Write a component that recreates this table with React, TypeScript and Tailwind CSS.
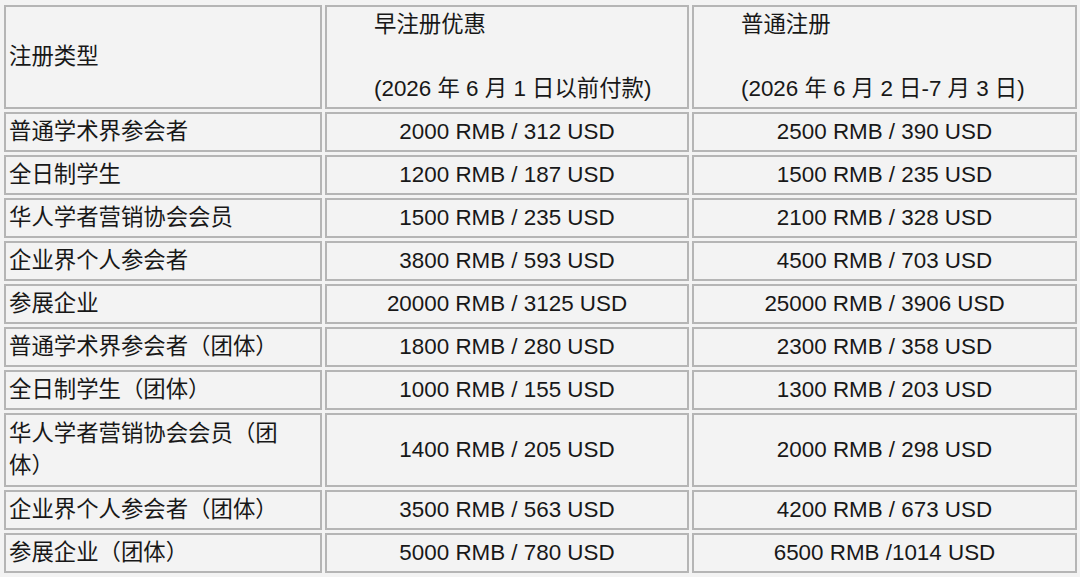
const rows: { name: React.ReactNode; early: string; normal: string; tall?: boolean }[] = [
  { name: "普通学术界参会者", early: "2000 RMB / 312 USD", normal: "2500 RMB / 390 USD" },
  { name: "全日制学生", early: "1200 RMB / 187 USD", normal: "1500 RMB / 235 USD" },
  { name: "华人学者营销协会会员", early: "1500 RMB / 235 USD", normal: "2100 RMB / 328 USD" },
  { name: "企业界个人参会者", early: "3800 RMB / 593 USD", normal: "4500 RMB / 703 USD" },
  { name: "参展企业", early: "20000 RMB / 3125 USD", normal: "25000 RMB / 3906 USD" },
  { name: "普通学术界参会者（团体）", early: "1800 RMB / 280 USD", normal: "2300 RMB / 358 USD" },
  { name: "全日制学生（团体）", early: "1000 RMB / 155 USD", normal: "1300 RMB / 203 USD" },
  {
    name: (
      <>
        华人学者营销协会会员（团
        <br />
        体）
      </>
    ),
    early: "1400 RMB / 205 USD",
    normal: "2000 RMB / 298 USD",
    tall: true,
  },
  { name: "企业界个人参会者（团体）", early: "3500 RMB / 563 USD", normal: "4200 RMB / 673 USD" },
  { name: "参展企业（团体）", early: "5000 RMB / 780 USD", normal: "6500 RMB /1014 USD" },
]

const cell = "border-2 border-[#b5b5b5] py-[2px] px-[3px] align-middle"

export default function App() {
  return (
    <div className="w-[1080px] h-[577px] bg-[#f3f3f3] overflow-hidden text-[#181818] text-[22.4px] leading-[32px] font-['Liberation_Sans','Noto_Sans_CJK_SC',sans-serif]">
      <table className="ml-px mt-0.5 border-separate border-spacing-[3px] table-fixed w-[1078px]">
        <colgroup>
          <col className="w-[318px]" />
          <col className="w-[364px]" />
          <col className="w-[385px]" />
        </colgroup>
        <thead>
          <tr className="h-[103px]">
            <th className={`${cell} text-left font-normal`}>注册类型</th>
            <th className={`${cell} text-left font-normal pl-[47px]`}>
              早注册优惠
              <br />
              &nbsp;
              <br />
              (2026 年 6 月 1 日以前付款)
            </th>
            <th className={`${cell} text-left font-normal pl-[47px]`}>
              普通注册
              <br />
              &nbsp;
              <br />
              (2026 年 6 月 2 日-7 月 3 日)
            </th>
          </tr>
        </thead>
        <tbody>
          {rows.map((r, i) => (
            <tr key={i} className={r.tall ? "h-[74px]" : "h-[40px]"}>
              <td className={`${cell} text-left`}>{r.name}</td>
              <td className={`${cell} text-center`}>{r.early}</td>
              <td className={`${cell} text-center`}>{r.normal}</td>
            </tr>
          ))}
        </tbody>
      </table>
    </div>
  )
}
